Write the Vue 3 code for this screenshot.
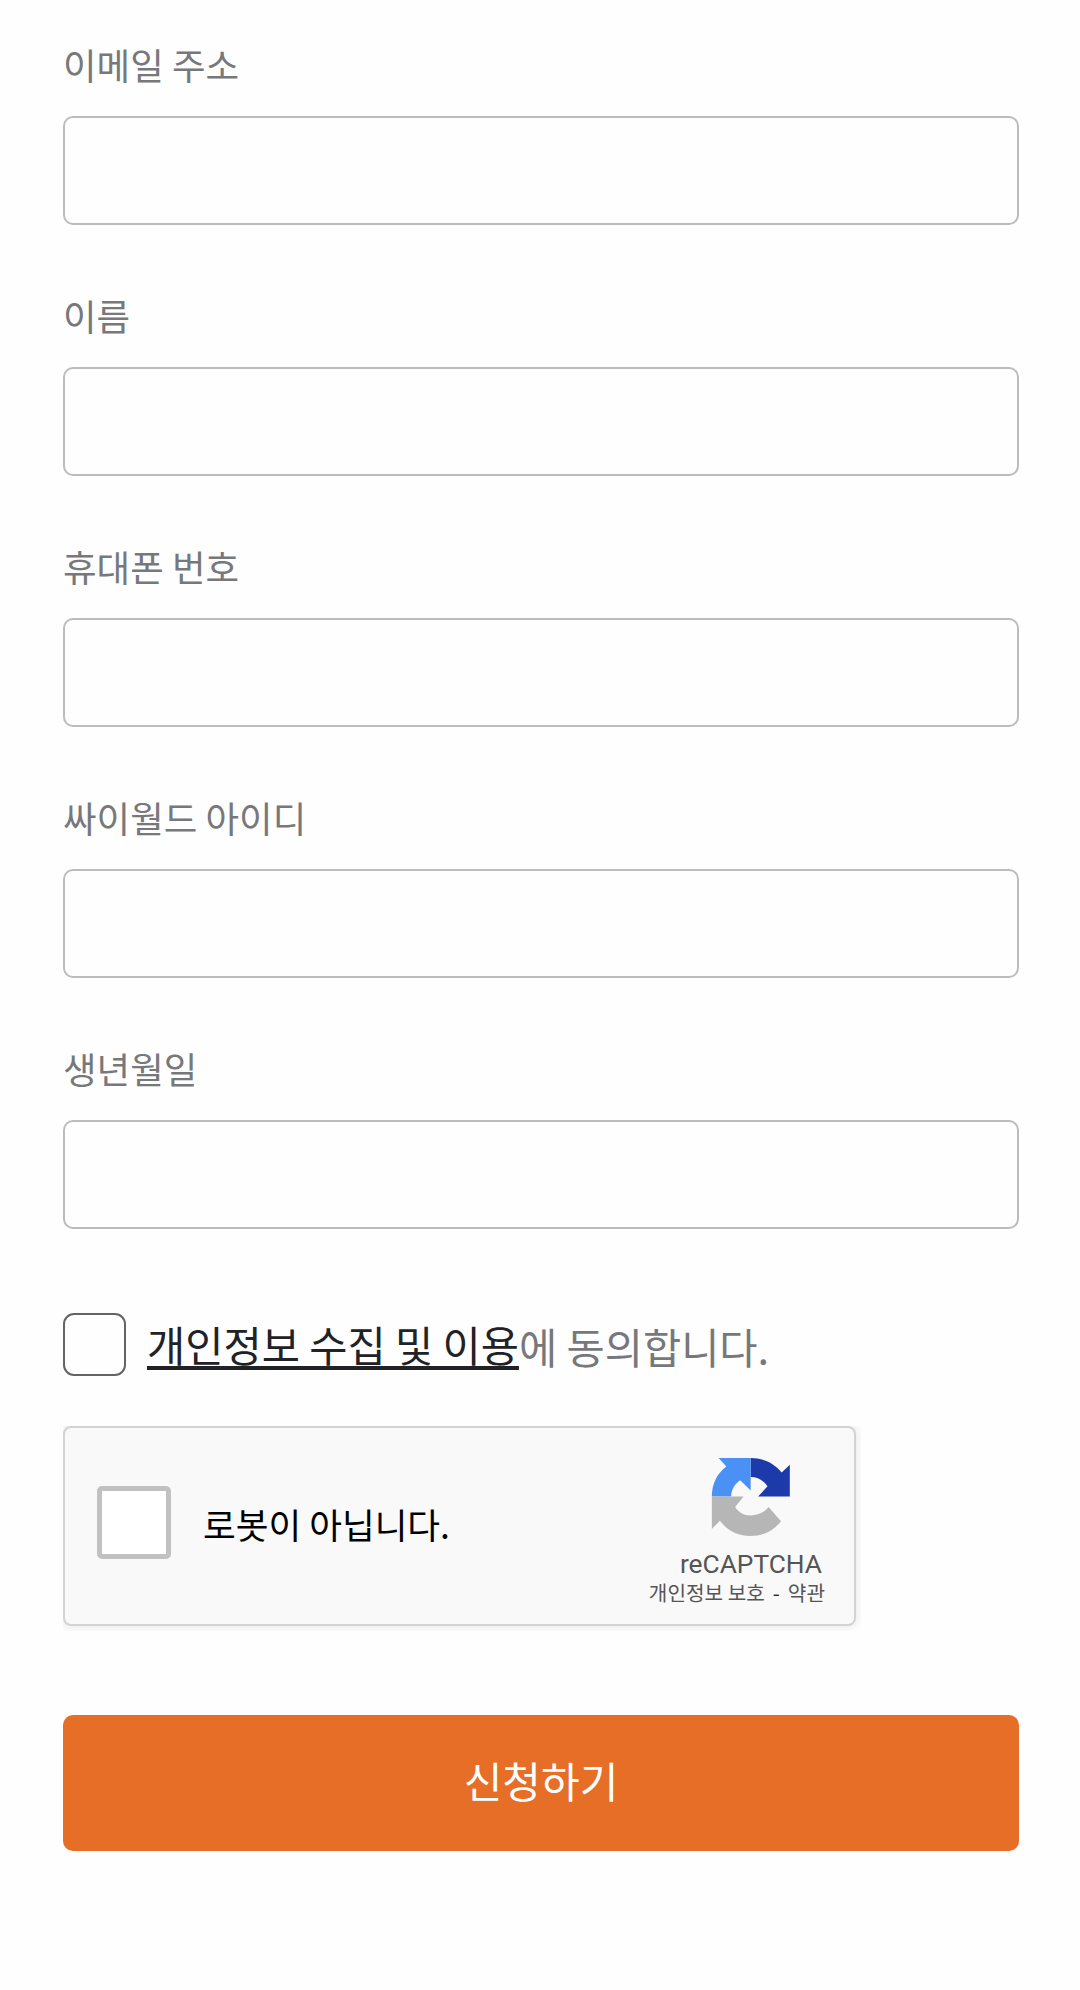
<template>
  <form class="form" @submit.prevent>
    <div v-for="field in fields" :key="field.id" class="field">
      <label :for="field.id">{{ field.label }}</label>
      <input :id="field.id" v-model="field.value" type="text" />
    </div>

    <div class="agree">
      <input v-model="agreed" type="checkbox" aria-labelledby="agree-text" />
      <p id="agree-text"><a class="terms">개인정보 수집 및 이용</a>에 동의합니다.</p>
    </div>

    <div class="captcha-clip">
      <div class="captcha">
        <span class="captcha-box"></span>
        <span class="captcha-label">로봇이 아닙니다.</span>
        <div class="brand">
          <svg class="logo" viewBox="36 39 236 237" aria-hidden="true">
            <path fill="#1c3aa9" d="M153 42C191 42 222 57 245 85L269 62V156H175L203 126C191 108 174 98 153 98Z" />
            <path fill="#4a90f5" d="M153 42H58L81 67C53 88 38 119 38 156H95C96 136 105 119 122 108L153 138Z" />
            <path fill="#b6b6b6" d="M38 156H132L107 187C117 203 133 212 153 212C175 212 193 203 206 187L243 229C221 258 190 273 153 273C115 273 84 257 62 228L38 252Z" />
          </svg>
          <span class="brand-name">reCAPTCHA</span>
          <span class="brand-links"><a>개인정보 보호</a><i>-</i><a>약관</a></span>
        </div>
      </div>
    </div>

    <button type="submit">신청하기</button>
  </form>
</template>

<script setup>
import { ref } from 'vue'

const fields = ref([
  { id: 'email', label: '이메일 주소', value: '' },
  { id: 'name', label: '이름', value: '' },
  { id: 'phone', label: '휴대폰 번호', value: '' },
  { id: 'cyworld', label: '싸이월드 아이디', value: '' },
  { id: 'birth', label: '생년월일', value: '' },
])
const agreed = ref(false)
</script>

<style>
body {
  background: #fefefe;
}
</style>

<style scoped>
.form {
  box-sizing: border-box;
  width: 1080px;
  height: 1990px;
  padding: 38px 61px 0 63px;
  font-family: 'Noto Sans CJK KR', sans-serif;
  color: #77787b;
}

.field {
  display: flex;
  flex-direction: column;
  margin-bottom: 64px;
}
.field label {
  height: 78px;
  font-size: 36.5px;
  line-height: 54px;
}
.field input {
  box-sizing: border-box;
  width: 100%;
  height: 109px;
  padding: 0 30px;
  border: 2px solid #bcbcbd;
  border-radius: 10px;
  outline: none;
  background: #fefefe;
  font: inherit;
  font-size: 36px;
}

.agree {
  display: flex;
  align-items: center;
  gap: 21px;
  height: 63px;
  margin-top: 84px;
}
.agree input {
  appearance: none;
  box-sizing: border-box;
  width: 63px;
  height: 63px;
  margin: 0;
  border: 2px solid #646466;
  border-radius: 11px;
  background: #fefefe;
}
.agree p {
  margin: 2px 0 0;
  font-size: 41.55px;
  line-height: 62px;
  white-space: nowrap;
}
.terms {
  position: relative;
  top: -2px;
  color: #212226;
  text-decoration: underline;
  text-decoration-thickness: 4px;
  text-underline-offset: 4px;
  text-decoration-skip-ink: none;
}

/* the widget frame cuts its shadow off on every side */
.captcha-clip {
  width: 798px;
  height: 205px;
  margin-top: 50px;
  overflow: hidden;
}
.captcha {
  display: flex;
  align-items: center;
  box-sizing: border-box;
  width: 793px;
  height: 200px;
  padding: 0 29px 0 32px;
  border: 2px solid #d3d3d3;
  border-radius: 8px;
  background: #f9f9f9;
  box-shadow: 0 0 10px 2px rgba(0, 0, 0, 0.08);
}
.captcha-box {
  box-sizing: border-box;
  width: 74px;
  height: 73px;
  margin-top: -7px;
  border: 5px solid #c1c1c1;
  border-radius: 5px;
  background: #fff;
}
.captcha-label {
  margin: -4px 0 0 32px;
  color: #000;
  font-size: 35.6px;
  line-height: 54px;
}
.brand {
  display: flex;
  flex-direction: column;
  align-self: flex-start;
  align-items: flex-end;
  margin-left: auto;
  padding-top: 29px;
  color: #555;
}
.logo {
  width: 80px;
  height: 80px;
  margin-right: 34px;
}
.brand-name {
  margin-top: 10px;
  margin-right: 3px;
  font-family: Roboto, sans-serif;
  font-size: 26.3px;
  line-height: 34px;
}
.brand-links {
  margin-top: -1px;
  font-size: 20.2px;
  line-height: 26px;
  white-space: nowrap;
}
.brand-links i {
  margin: 0 8px;
  color: #222;
  font-style: normal;
}

button {
  display: block;
  width: 100%;
  height: 136px;
  margin-top: 84px;
  padding: 0 0 6px;
  border: 0;
  border-radius: 10px;
  background: #e66e27;
  color: #fff;
  font-family: inherit;
  font-size: 42px;
  line-height: 62px;
}
</style>
